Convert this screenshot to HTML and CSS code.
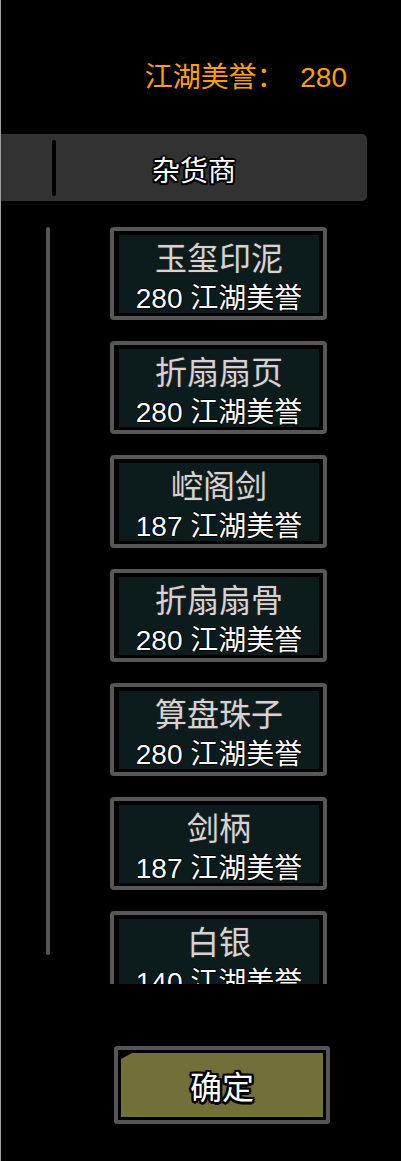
FILE: index.html
```html
<!DOCTYPE html>
<html lang="zh">
<head>
<meta charset="utf-8">
<link rel="stylesheet" href="styles.css">
</head>
<body>
<div class="page">
  <div class="header">江湖美誉：  280</div>
  <div class="shop-bar">
    <span class="divider"></span>
    <span class="shop-title">杂货商</span>
  </div>
  <div class="list-area">
    <div class="scrollbar"></div>
    <div class="items">
      <div class="item"><div class="item-inner"><div class="name">玉玺印泥</div><div class="price">280 江湖美誉</div></div></div>
      <div class="item"><div class="item-inner"><div class="name">折扇扇页</div><div class="price">280 江湖美誉</div></div></div>
      <div class="item"><div class="item-inner"><div class="name">崆阁剑</div><div class="price">187 江湖美誉</div></div></div>
      <div class="item"><div class="item-inner"><div class="name">折扇扇骨</div><div class="price">280 江湖美誉</div></div></div>
      <div class="item"><div class="item-inner"><div class="name">算盘珠子</div><div class="price">280 江湖美誉</div></div></div>
      <div class="item"><div class="item-inner"><div class="name">剑柄</div><div class="price">187 江湖美誉</div></div></div>
      <div class="item"><div class="item-inner"><div class="name">白银</div><div class="price">140 江湖美誉</div></div></div>
    </div>
  </div>
  <div class="confirm">
    <div class="confirm-inner">确定</div>
  </div>
</div>
</body>
</html>
```

FILE: styles.css
```css
html, body {
  margin: 0;
  padding: 0;
  background: #000;
}

body {
  font-family: "Liberation Sans", "Noto Sans CJK SC", "Noto Sans", sans-serif;
}

.page {
  width: 400px;
  height: 1161px;
  border-left: 1px solid #a0a0a0;
  overflow: hidden;
}

.header {
  padding-top: 63px;
  padding-right: 54px;
  height: 30px;
  line-height: 30px;
  font-size: 28px;
  color: #ffa000;
  text-align: right;
  white-space: pre;
}

.shop-bar {
  margin-top: 41px;
  width: 366px;
  height: 67px;
  background: #323232;
  border-radius: 0 5px 5px 0;
  display: flex;
  align-items: center;
}

.divider {
  margin-left: 51px;
  width: 4px;
  height: 56px;
  border-radius: 2px;
  background: #000;
}

.shop-title {
  margin-left: 96px;
  margin-top: 8px;
  font-size: 28px;
  line-height: 34px;
  color: #fff;
  text-shadow: 2px 0 0 #000, -2px 0 0 #000, 0 2px 0 #000, 0 -2px 0 #000,
    1.5px 1.5px 0 #000, -1.5px 1.5px 0 #000, 1.5px -1.5px 0 #000, -1.5px -1.5px 0 #000;
}

.list-area {
  margin-top: 21px;
  height: 762px;
  overflow: hidden;
  display: flex;
  align-items: flex-start;
}

.scrollbar {
  margin-left: 45px;
  margin-top: 5px;
  width: 4px;
  height: 728px;
  border-radius: 2px;
  background: #555;
  flex: none;
}

.items {
  margin-left: 60px;
  padding-top: 5px;
  display: flex;
  flex-direction: column;
  gap: 21px;
}

.item {
  width: 217px;
  height: 93px;
  box-sizing: border-box;
  border: 4px solid #575757;
  border-radius: 4px;
  background: #000;
  padding: 4px 4px 3px 5px;
}

.item-inner {
  height: 78px;
  background: #0c1c1c;
  display: flex;
  flex-direction: column;
  align-items: center;
  padding-top: 5px;
  box-sizing: border-box;
}

.name {
  font-size: 32px;
  line-height: 38px;
  color: #d4d4d4;
  text-shadow: 1px 0 0 #222, -1px 0 0 #222, 0 1px 0 #222, 0 -1px 0 #222;
}

.price {
  margin-top: 5px;
  font-size: 28px;
  line-height: 32px;
  color: #fff;
  white-space: pre;
  text-shadow: 1px 0 0 #000, -1px 0 0 #000, 0 1px 0 #000, 0 -1px 0 #000;
}

.confirm {
  margin-top: 62px;
  margin-left: 113px;
  width: 216px;
  height: 78px;
  box-sizing: border-box;
  border: 4px solid #555;
  border-radius: 3px;
  background: #000;
  padding: 3px;
}

.confirm-inner {
  height: 100%;
  background: #707038;
  clip-path: polygon(11px 0, 100% 0, 100% 100%, 0 100%, 0 6px);
  display: flex;
  align-items: center;
  justify-content: center;
  font-size: 32px;
  color: #fff;
  text-shadow: 2.5px 0 0 #000, -2.5px 0 0 #000, 0 2.5px 0 #000, 0 -2.5px 0 #000,
    2px 2px 0 #000, -2px 2px 0 #000, 2px -2px 0 #000, -2px -2px 0 #000;
}
```
